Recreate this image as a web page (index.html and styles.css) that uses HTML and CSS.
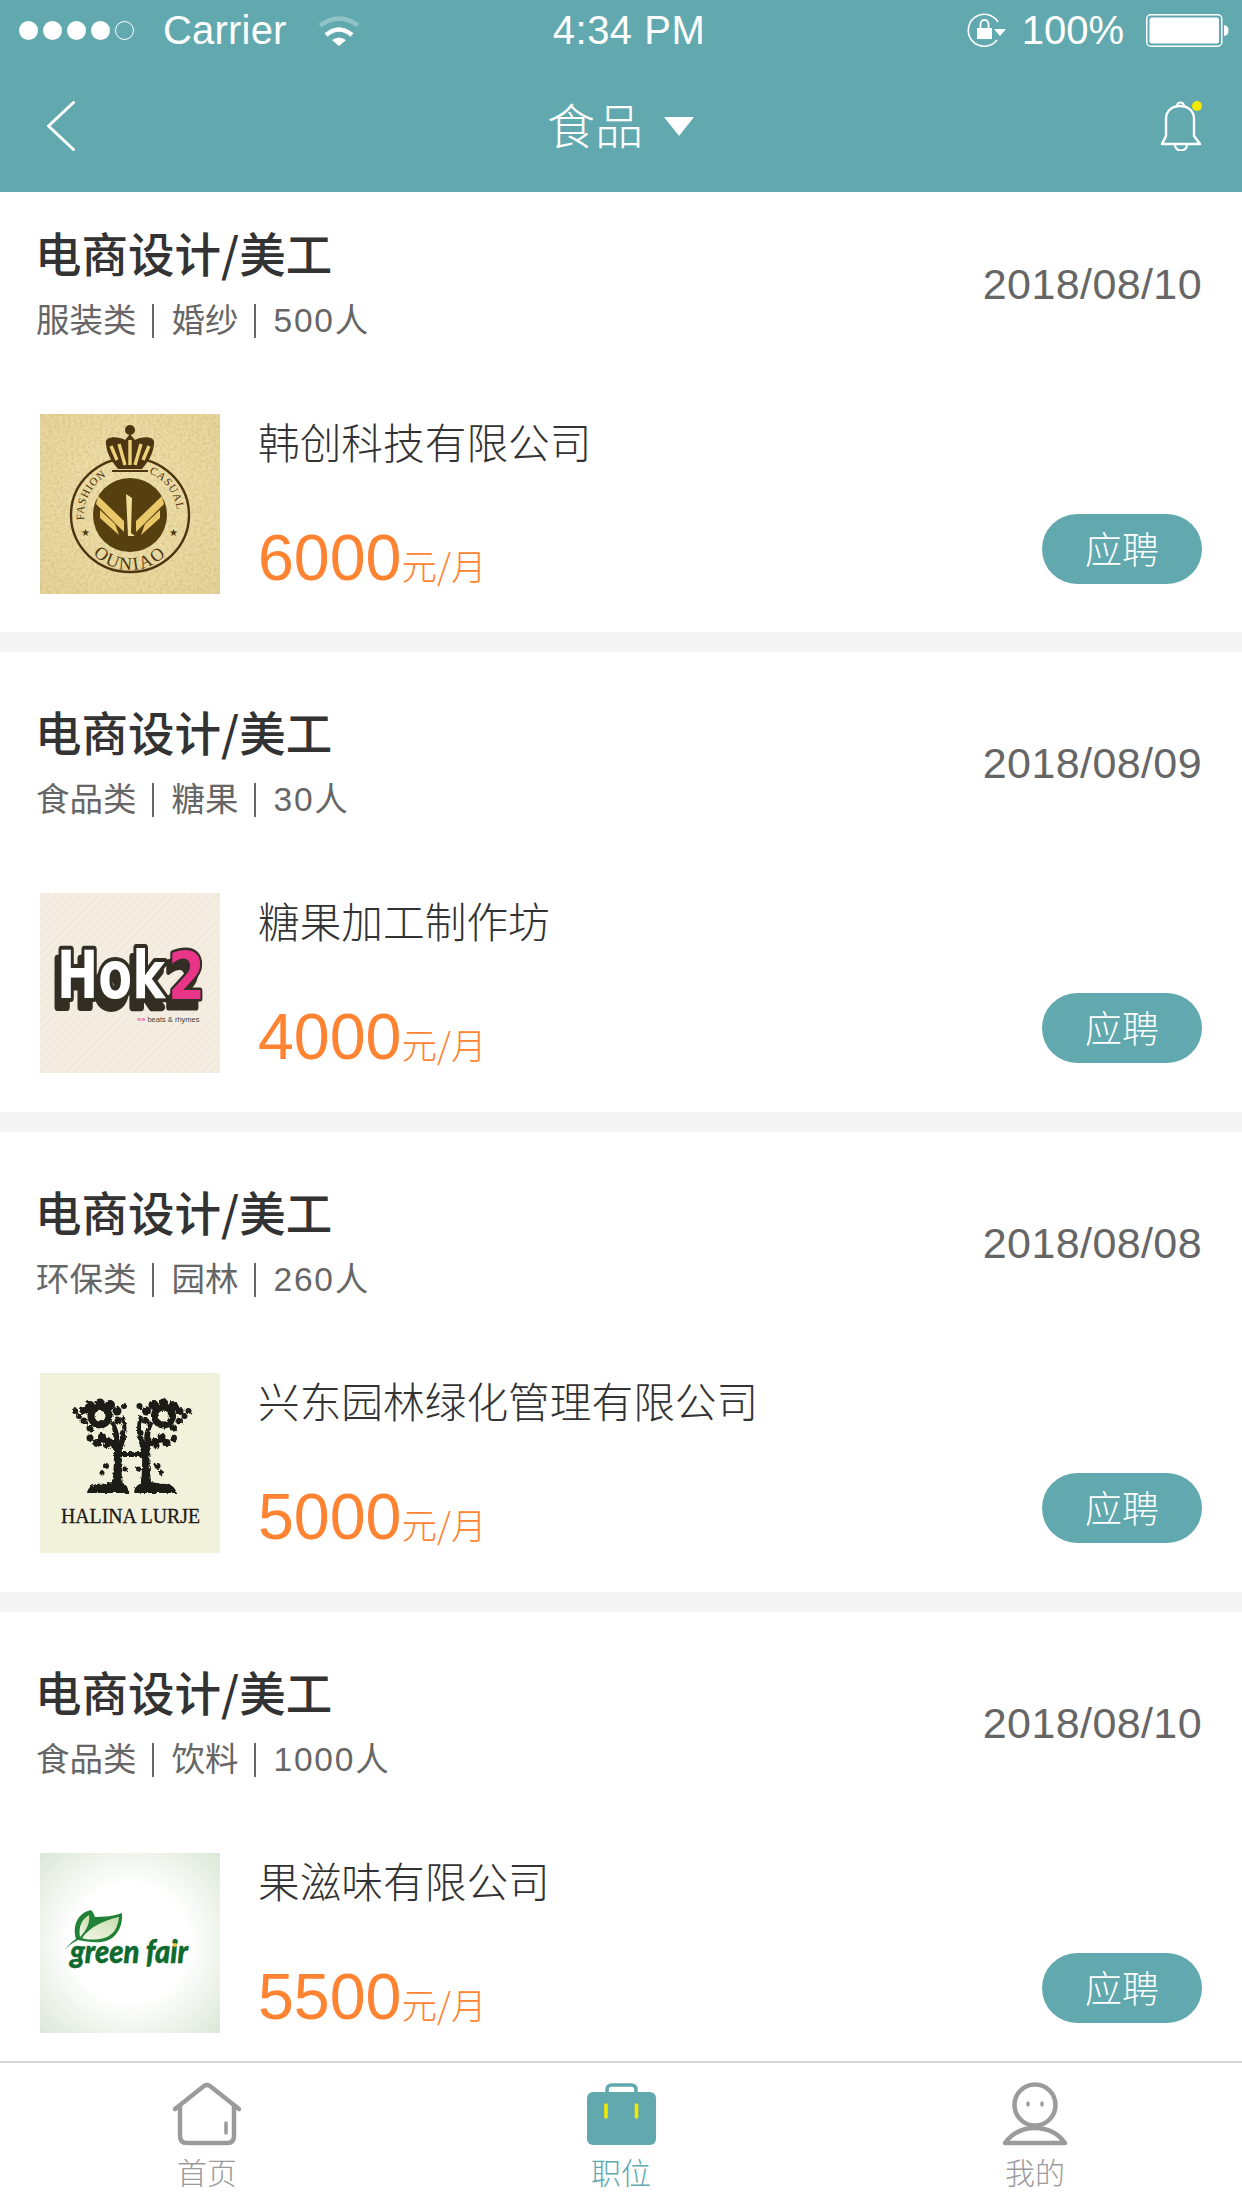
FILE: index.html
```html
<!DOCTYPE html>
<html lang="zh-CN">
<head>
  <meta charset="UTF-8">
  <meta name="viewport" content="width=device-width, initial-scale=1.0">
  <title>职位列表</title>
  <link rel="stylesheet" href="styles.css">
</head>
<body>
  <div class="page">
    <header class="top">
      <div class="status">
        <div class="status-left">
          <div class="signal">
            <i class="dot"></i><i class="dot"></i><i class="dot"></i><i class="dot"></i><i class="dot empty"></i>
          </div>
          <span class="carrier">Carrier</span>
          <svg class="wifi" viewBox="0 0 42 31" width="42" height="31">
            <path d="M2 10.5 Q21 -3.5 40 10.5" fill="none" stroke="#fff" stroke-opacity=".3" stroke-width="4.5"/>
            <path d="M8 20 Q21 9 34 20" fill="none" stroke="#fff" stroke-width="4.5"/>
            <path d="M14 25 Q21 20 28 25 L21 31 Z" fill="#fff"/>
          </svg>
        </div>
        <span class="time">4:34 PM</span>
        <div class="status-right">
          <svg class="lock" viewBox="0 0 40 34" width="40" height="34">
            <path d="M30 27 A16 16 0 1 1 31 9" fill="none" stroke="#fff" stroke-width="1.6"/>
            <path d="M27 16 H39 L33 23 Z" fill="#fff"/>
            <rect x="10" y="15" width="15" height="11" fill="#fff"/>
            <path d="M13.500 15 V11 A4 4 0 0 1 21.500 11 V15" fill="none" stroke="#fff" stroke-width="1.8"/>
          </svg>
          <span class="battery-text">100%</span>
          <svg class="battery" viewBox="0 0 83 33" width="83" height="33">
            <rect x=".75" y=".75" width="75" height="31.5" rx="4" fill="none" stroke="#fff" stroke-width="1.5"/>
            <rect x="3.5" y="3.5" width="69.5" height="26" rx="2.5" fill="#fff"/>
            <path d="M78 11 Q82.5 11.5 82.5 16.5 Q82.5 21.5 78 22 Z" fill="#fff"/>
          </svg>
        </div>
      </div>
      <nav class="nav">
        <svg class="back" viewBox="0 0 28 50" width="28" height="50">
          <path d="M26.5 1.5 L1.5 25 L26.5 48.5" fill="none" stroke="#fff" stroke-width="3" stroke-linecap="round" stroke-linejoin="round"/>
        </svg>
        <div class="nav-title">
          <span>食品</span>
          <i class="caret"></i>
        </div>
        <svg class="bell" viewBox="0 0 42 50" width="42" height="50">
          <path d="M2 44 L6 36 V19 C6 10 13 6 20 6 C27 6 34 10 34 19 V36 L40 44 Z" transform="translate(0 -1)" fill="none" stroke="#fff" stroke-width="2.4" stroke-linejoin="round"/>
          <path d="M17 5 A3.5 3.5 0 0 1 24 5" fill="none" stroke="#fff" stroke-width="2.2"/>
          <path d="M15 44 A6 5.5 0 0 0 27 44" fill="none" stroke="#fff" stroke-width="2.2"/>
          <ellipse cx="37" cy="5" rx="5" ry="5" fill="#f5e900"/>
        </svg>
      </nav>
    </header>

    <main class="jobs">
      <article class="job">
        <div class="job-head">
          <div>
            <h2 class="job-title">电商设计/美工</h2>
            <p class="job-meta"><span>服装类</span><i></i><span>婚纱</span><i></i><span>500人</span></p>
          </div>
          <span class="job-date">2018/08/10</span>
        </div>
        <div class="job-body">
          <svg class="logo" viewBox="0 0 180 180" width="180" height="180">
            <defs>
              <radialGradient id="paper" cx=".5" cy=".45" r=".75">
                <stop offset="0" stop-color="#f1e2ae"/>
                <stop offset="1" stop-color="#e6d39a"/>
              </radialGradient>
              <filter id="grain" x="0" y="0" width="100%" height="100%">
                <feTurbulence type="fractalNoise" baseFrequency=".35" numOctaves="3" seed="4"/>
                <feColorMatrix values="0 0 0 0 .5  0 0 0 0 .38  0 0 0 0 .12  0 0 0 -.8 .5"/>
              </filter>
              <path id="arc-left" d="M44 106 A46 46 0 0 1 70 60"/>
              <path id="arc-right" d="M109 59 A46 46 0 0 1 137 106"/>
              <path id="arc-bottom" d="M41 116 A50 50 0 0 0 139 116"/>
            </defs>
            <rect width="180" height="180" fill="url(#paper)"/>
            <rect width="180" height="180" filter="url(#grain)"/>
            <ellipse cx="90" cy="101" rx="59" ry="57" fill="none" stroke="#4c3510" stroke-width="2.4"/>
            <ellipse cx="90" cy="101" rx="37" ry="37" fill="#57400f"/>
            <g fill="#e8c868">
              <path d="M58 82 L84 107 V118 L56 90 Z"/>
              <path d="M122 82 L96 107 V118 L124 90 Z"/>
              <path d="M60 96 L75 110 L79 121 L60 104 Z"/>
              <path d="M120 96 L105 110 L101 121 L120 104 Z"/>
              <path d="M86 80 L92 84 L91 119 L95 122 L88 122 Z" fill="#f0dc94"/>
            </g>
            <path d="M66 30 C64 22 78 22 85 26 L90 20 L95 26 C102 22 116 22 114 30 C113 42 106 50 102 55 H78 C74 50 67 42 66 30 Z" fill="#4c3510"/>
            <g stroke="#ecd17a" stroke-width="3.4" fill="none">
              <path d="M79 30 L85 51"/>
              <path d="M90 26 V51"/>
              <path d="M101 30 L95 51"/>
              <path d="M71 32 L77 46"/>
              <path d="M109 32 L103 46"/>
            </g>
            <circle cx="90" cy="16" r="5" fill="#4c3510"/>
            <path d="M72 57 H108" stroke="#4c3510" stroke-width="2"/>
            <text class="logo-serif ring-text"><textPath href="#arc-left">FASHION</textPath></text>
            <text class="logo-serif ring-text"><textPath href="#arc-right">CASUAL</textPath></text>
            <text class="logo-serif ring-name"><textPath href="#arc-bottom" startOffset="50%">OUNIAO</textPath></text>
            <text class="logo-serif ring-star" x="41" y="122">★</text>
            <text class="logo-serif ring-star" x="129" y="122">★</text>
          </svg>
          <div class="job-info">
            <h3 class="company">韩创科技有限公司</h3>
            <p class="salary"><b>6000</b><span>元/月</span></p>
          </div>
          <button class="apply">应聘</button>
        </div>
      </article>

      <article class="job">
        <div class="job-head">
          <div>
            <h2 class="job-title">电商设计/美工</h2>
            <p class="job-meta"><span>食品类</span><i></i><span>糖果</span><i></i><span>30人</span></p>
          </div>
          <span class="job-date">2018/08/09</span>
        </div>
        <div class="job-body">
          <svg class="logo" viewBox="0 0 180 180" width="180" height="180">
            <defs>
              <pattern id="stripes" width="6" height="6" patternUnits="userSpaceOnUse" patternTransform="rotate(-45)">
                <rect width="6" height="6" fill="#f3ede2"/>
                <rect width="6" height="2" fill="#f0e9dc"/>
              </pattern>
            </defs>
            <rect width="180" height="180" fill="url(#stripes)"/>
            <text class="hok hok-white" x="17" y="105" textLength="108" lengthAdjust="spacingAndGlyphs">Hok</text>
            <text class="hok hok-pink" x="128" y="106" textLength="37" lengthAdjust="spacingAndGlyphs">2</text>
            <text class="hok-small" x="97" y="129"><tspan fill="#e5317f">»»</tspan> beats &amp; rhymes</text>
          </svg>
          <div class="job-info">
            <h3 class="company">糖果加工制作坊</h3>
            <p class="salary"><b>4000</b><span>元/月</span></p>
          </div>
          <button class="apply">应聘</button>
        </div>
      </article>

      <article class="job">
        <div class="job-head">
          <div>
            <h2 class="job-title">电商设计/美工</h2>
            <p class="job-meta"><span>环保类</span><i></i><span>园林</span><i></i><span>260人</span></p>
          </div>
          <span class="job-date">2018/08/08</span>
        </div>
        <div class="job-body">
          <svg class="logo" viewBox="0 0 180 180" width="180" height="180">
            <defs>
              <filter id="rough" x="-10%" y="-10%" width="120%" height="120%">
                <feTurbulence type="fractalNoise" baseFrequency=".3" numOctaves="2" seed="7"/>
                <feDisplacementMap in="SourceGraphic" scale="4"/>
              </filter>
              <g id="tree" fill="#1d1a16">
                <path d="M72 112 C74 98 74 86 74 78 C72 72 66 68 56 70 L55 67 C62 64 70 64 73 67 C74 60 72 54 70 50 L74 48 C78 56 80 62 79 68 C83 60 84 52 80 44 L84 42 C88 52 87 66 82 76 C81 88 81 100 83 112 Z"/>
                <path d="M80 79 H93 V84 H80 Z"/>
                <circle cx="60" cy="43" r="9" fill="none" stroke="#1d1a16" stroke-width="7"/>
                <circle cx="50" cy="33" r="5"/><circle cx="60" cy="30" r="4.500"/><circle cx="70" cy="32" r="5"/><circle cx="77" cy="38" r="4.500"/>
                <circle cx="44" cy="38" r="4"/><circle cx="35" cy="38" r="3"/><circle cx="39" cy="43" r="3"/><circle cx="44" cy="48" r="3.500"/>
                <circle cx="50" cy="55" r="3.500"/><circle cx="78" cy="48" r="3.500"/><circle cx="84" cy="33" r="3"/>
                <circle cx="50" cy="65" r="3.500"/><circle cx="57" cy="70" r="4"/><circle cx="62" cy="64" r="4"/><circle cx="67" cy="73" r="3"/>
                <circle cx="83" cy="60" r="3"/><circle cx="66" cy="93" r="3"/><circle cx="62" cy="100" r="2.500"/><circle cx="85" cy="96" r="2.500"/>
                <path d="M47 120 C48 113 56 110 62 111 L72 109 L84 111 C88 113 90 118 89 120 Z"/>
              </g>
            </defs>
            <rect width="180" height="180" fill="#f1f1dc"/>
            <g filter="url(#rough)">
              <use href="#tree"/>
              <use href="#tree" transform="translate(183.5 0) scale(-1 1)"/>
            </g>
            <text class="halina" x="21" y="150" textLength="139" lengthAdjust="spacingAndGlyphs">HALINA LURJE</text>
          </svg>
          <div class="job-info">
            <h3 class="company">兴东园林绿化管理有限公司</h3>
            <p class="salary"><b>5000</b><span>元/月</span></p>
          </div>
          <button class="apply">应聘</button>
        </div>
      </article>

      <article class="job">
        <div class="job-head">
          <div>
            <h2 class="job-title">电商设计/美工</h2>
            <p class="job-meta"><span>食品类</span><i></i><span>饮料</span><i></i><span>1000人</span></p>
          </div>
          <span class="job-date">2018/08/10</span>
        </div>
        <div class="job-body">
          <svg class="logo" viewBox="0 0 180 180" width="180" height="180">
            <defs>
              <radialGradient id="mist" cx=".5" cy=".5" r=".72">
                <stop offset=".45" stop-color="#fff"/>
                <stop offset="1" stop-color="#dbe6d6"/>
              </radialGradient>
              <linearGradient id="leaf" x1="0" y1="1" x2="1" y2="0">
                <stop offset="0" stop-color="#f3f7e6"/>
                <stop offset="1" stop-color="#c8dcae"/>
              </linearGradient>
            </defs>
            <rect width="180" height="180" fill="url(#mist)"/>
            <path d="M24 98 C30 90 33 88 36 86 C32 72 38 60 51 57 C53 59 54 61 55 64 C64 64 74 63 82 60 C83 72 78 84 66 88 C56 91 46 88 38 87 C32 90 28 93 24 98 Z" fill="#1f8236"/>
            <path d="M40 84 C38 74 42 66 49 62 C50 68 48 76 40 84 Z" fill="url(#leaf)"/>
            <path d="M42 85 C50 74 62 68 79 64 C78 74 74 82 64 85 C56 87 48 87 42 85 Z" fill="url(#leaf)"/>
            <text class="green" x="30" y="110" textLength="118" lengthAdjust="spacingAndGlyphs">green fair</text>
            <circle cx="135" cy="92" r="2" fill="#f0c53a"/>
          </svg>
          <div class="job-info">
            <h3 class="company">果滋味有限公司</h3>
            <p class="salary"><b>5500</b><span>元/月</span></p>
          </div>
          <button class="apply">应聘</button>
        </div>
      </article>
    </main>

    <footer class="tabs">
      <a class="tab">
        <svg viewBox="0 0 68 62" width="68" height="62">
          <path d="M2 26 L31 3 Q34 1 37 3 L66 26" fill="none" stroke="#9b9b9b" stroke-width="4.500" stroke-linecap="round" stroke-linejoin="round"/>
          <path d="M7 23 V53 Q7 60 14 60 H54 Q61 60 61 53 V23" fill="none" stroke="#9b9b9b" stroke-width="4.500"/>
          <path d="M53 40 V50" stroke="#9b9b9b" stroke-width="3.500" stroke-linecap="round"/>
        </svg>
        <span>首页</span>
      </a>
      <a class="tab active">
        <svg viewBox="0 0 69 62" width="69" height="62">
          <path d="M20 10 V7 Q20 2 25 2 H44 Q49 2 49 7 V10" fill="none" stroke="#61a9af" stroke-width="3.600"/>
          <rect y="9" width="69" height="53" rx="6" fill="#61a9af"/>
          <path d="M19 22 V34 M49.500 22 V34" stroke="#f5e900" stroke-width="3.600" stroke-linecap="round"/>
        </svg>
        <span>职位</span>
      </a>
      <a class="tab">
        <svg viewBox="0 0 64 62" width="64" height="62">
          <circle cx="32" cy="22" r="20.500" fill="none" stroke="#9b9b9b" stroke-width="4.500"/>
          <ellipse cx="25" cy="21" rx="1.800" ry="2.800" fill="#9b9b9b"/>
          <ellipse cx="39" cy="21" rx="1.800" ry="2.800" fill="#9b9b9b"/>
          <path d="M2 60 C10 49 20 45 32 45 C44 45 54 49 62 60 Z" fill="none" stroke="#9b9b9b" stroke-width="4.500" stroke-linejoin="round"/>
        </svg>
        <span>我的</span>
      </a>
    </footer>
  </div>
</body>
</html>
```

FILE: styles.css
```css
* {
  box-sizing: border-box;
}

body {
  margin: 0;
  background: #fff;
  font-family: "Liberation Sans", "Noto Sans CJK SC", sans-serif;
}

h2, h3, p {
  margin: 0;
}

.page {
  display: flex;
  flex-direction: column;
  height: 2208px;
  overflow: hidden;
}

.top {
  flex: none;
  height: 192px;
  background: #61a9af;
  color: #fff;
}

.status {
  display: grid;
  grid-template-columns: 1fr auto 1fr;
  align-items: center;
  height: 60px;
  padding: 0 13px 0 19px;
  font-size: 40px;
}

.status-left, .status-right {
  display: flex;
  align-items: center;
}

.status-right {
  justify-content: flex-end;
}

.signal {
  display: flex;
  gap: 5px;
}

.dot {
  width: 19px;
  height: 19px;
  border-radius: 50%;
  background: #fff;
}

.dot.empty {
  background: none;
  border: 1px solid #fff;
}

.carrier {
  margin-left: 29px;
  letter-spacing: .2px;
}

.wifi {
  margin-left: 31px;
}

.time {
  margin-left: 10px;
  letter-spacing: .5px;
}

.battery-text {
  margin-left: 15px;
}

.battery {
  margin-left: 22px;
}

.nav {
  display: flex;
  align-items: center;
  justify-content: space-between;
  height: 132px;
  padding: 0 40px 0 47px;
}

.bell {
  width: 42px;
}

.nav-title {
  display: flex;
  align-items: center;
  gap: 21px;
  font-family: "Noto Sans CJK SC", sans-serif;
  font-size: 48px;
  font-weight: 300;
  line-height: 60px;
  margin: 0 0 6px 6px;
}

.caret {
  width: 0;
  height: 0;
  margin-top: 6px;
  border-left: 15px solid transparent;
  border-right: 15px solid transparent;
  border-top: 19px solid #fff;
}

.jobs {
  flex: 1;
  min-height: 0;
  overflow: hidden;
  background: #f4f4f4;
}

.job {
  height: 460px;
  padding: 54px 40px 0;
  background: #fff;
}

.job:first-child {
  height: 440px;
  padding-top: 35px;
}

.job + .job {
  margin-top: 20px;
}

.job-head {
  display: flex;
  align-items: center;
  justify-content: space-between;
}

.job-title {
  margin-left: -5px;
  font-family: "Noto Sans CJK SC", sans-serif;
  font-size: 46.500px;
  font-weight: 500;
  line-height: 50px;
  color: #333;
}

.job-meta {
  display: flex;
  align-items: center;
  margin-top: 24px;
  margin-left: -4px;
  font-size: 33.500px;
  line-height: 40px;
  color: #666;
}

.job-meta i {
  width: 2px;
  height: 34px;
  margin: 0 18px 0 15px;
  background: #666;
}

.job-meta span:last-child {
  letter-spacing: 1.800px;
}

.job-date {
  font-size: 43px;
  letter-spacing: .4px;
  color: #666;
}

.job-body {
  display: flex;
  align-items: stretch;
  height: 180px;
  margin-top: 73px;
}

.logo {
  flex: none;
  display: block;
}

.job-info {
  flex: 1;
  margin-left: 38px;
  padding-top: 2px;
}

.company {
  font-family: "Noto Sans CJK SC", sans-serif;
  font-size: 41.700px;
  font-weight: 300;
  line-height: 50px;
  color: #333;
}

.salary {
  margin-top: 56px;
  line-height: 72px;
  color: #ff8330;
}

.salary b {
  font-size: 64.500px;
  font-weight: normal;
}

.salary span {
  font-family: "Noto Sans CJK SC", sans-serif;
  font-size: 35.500px;
  font-weight: 300;
}

.apply {
  align-self: flex-end;
  width: 160px;
  height: 70px;
  margin-bottom: 10px;
  padding: 0 0 3px;
  border: 0;
  border-radius: 35px;
  background: #61a9af;
  color: #fff;
  font-family: "Noto Sans CJK SC", sans-serif;
  font-size: 37px;
  font-weight: 300;
}

.tabs {
  flex: none;
  display: grid;
  grid-template-columns: repeat(3, 1fr);
  height: 147px;
  padding-top: 20px;
  border-top: 2px solid #d6d6d6;
  background: #fff;
}

.tab {
  display: flex;
  flex-direction: column;
  align-items: center;
  gap: 9px;
  font-family: "Noto Sans CJK SC", sans-serif;
  font-size: 30px;
  font-weight: 300;
  line-height: 34px;
  color: #9b9b9b;
}

.tab svg {
  display: block;
  overflow: visible;
}

.tab.active {
  color: #61a9af;
}

/* logo lettering */
.logo-serif {
  font-family: "Liberation Serif", serif;
  fill: #4c3510;
}

.ring-text {
  font-size: 11px;
  letter-spacing: .8px;
}

.ring-name {
  font-size: 18px;
  letter-spacing: 2px;
  text-anchor: middle;
}

.ring-star {
  font-family: "DejaVu Sans", sans-serif;
  font-size: 10px;
}

.hok {
  font-family: "DejaVu Sans", sans-serif;
  font-size: 66px;
  font-weight: bold;
  paint-order: stroke;
  stroke-linejoin: round;
  stroke: #332e24;
  filter: drop-shadow(-4px 9px 0 #332e24);
}

.hok-white {
  fill: #fff;
  stroke-width: 8px;
}

.hok-pink {
  fill: #e8358a;
  stroke-width: 5px;
}

.hok-small {
  font-family: "Liberation Sans", sans-serif;
  font-size: 7.500px;
  fill: #4a443a;
}

.halina {
  font-family: "Liberation Serif", serif;
  font-size: 20px;
  fill: #1d1a16;
  stroke: #1d1a16;
  stroke-width: .3px;
}

.green {
  font-family: Lato, sans-serif;
  font-size: 33px;
  font-weight: 900;
  font-style: italic;
  fill: #0e6a2e;
  stroke: #0e6a2e;
  stroke-width: .5px;
}
```
